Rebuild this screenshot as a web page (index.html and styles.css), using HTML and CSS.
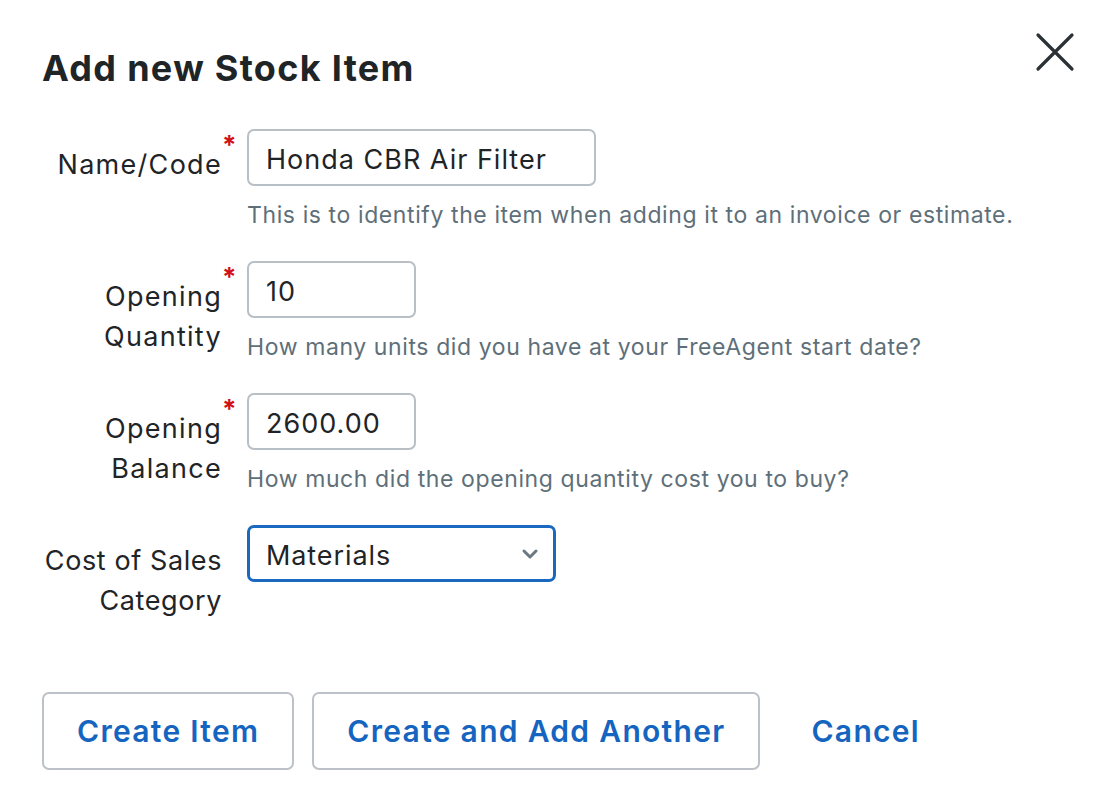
FILE: index.html
```html
<!DOCTYPE html>
<html lang="en">
<head>
<meta charset="utf-8">
<title>Add new Stock Item</title>
<link rel="stylesheet" href="styles.css">
</head>
<body>
<div class="modal">
  <div class="header">
    <h1 class="title">Add new Stock Item</h1>
    <button class="close" aria-label="Close">
      <svg width="40" height="40" viewBox="0 0 40 40"><path d="M3 3 L37 37 M37 3 L3 37" stroke="#2b3135" stroke-width="3.2" stroke-linecap="round" fill="none"/></svg>
    </button>
  </div>
  <form class="form">
    <div class="row">
      <label class="label"><span class="label-text">Name/Code</span><span class="req">*</span></label>
      <div class="field">
        <input class="input input-wide" type="text" value="Honda CBR Air Filter">
        <div class="help">This is to identify the item when adding it to an invoice or estimate.</div>
      </div>
    </div>
    <div class="row">
      <label class="label"><span class="label-text">Opening<br>Quantity</span><span class="req">*</span></label>
      <div class="field">
        <input class="input input-small" type="text" value="10">
        <div class="help">How many units did you have at your FreeAgent start date?</div>
      </div>
    </div>
    <div class="row">
      <label class="label"><span class="label-text">Opening<br>Balance</span><span class="req">*</span></label>
      <div class="field">
        <input class="input input-small" type="text" value="2600.00">
        <div class="help">How much did the opening quantity cost you to buy?</div>
      </div>
    </div>
    <div class="row">
      <label class="label"><span class="label-text label-text-tight">Cost of Sales<br>Category</span><span class="req"></span></label>
      <div class="field">
        <div class="select">
          <span class="select-value">Materials</span>
          <svg class="chev" width="18" height="12" viewBox="0 0 18 12"><path d="M3 3 L9 9 L15 3" stroke="#6b7880" stroke-width="3" fill="none" stroke-linecap="round" stroke-linejoin="round"/></svg>
        </div>
      </div>
    </div>
    <div class="actions">
      <button type="button" class="btn">Create Item</button>
      <button type="button" class="btn">Create and Add Another</button>
      <button type="button" class="link">Cancel</button>
    </div>
  </form>
</div>
</body>
</html>
```

FILE: styles.css
```css
* { box-sizing: border-box; }
html, body { margin: 0; padding: 0; background: #ffffff; }
body {
  font-family: "Inter", "Liberation Sans", sans-serif;
  color: #1f2427;
  width: 1106px;
  height: 800px;
  overflow: hidden;
}
.modal {
  padding: 28px 31px 0 42px;
}
.header {
  display: flex;
  justify-content: space-between;
  align-items: flex-start;
}
.title {
  margin: 18px 0 0 0;
  font-size: 36px;
  line-height: 44px;
  font-weight: 700;
  color: #1f2427;
  letter-spacing: 1.3px;
}
.close {
  border: 0;
  background: none;
  padding: 0;
  margin: 4px 0 0 0;
  width: 40px;
  height: 40px;
  cursor: pointer;
}
.close svg { display: block; }
.form {
  margin-top: 39px;
}
.row {
  display: grid;
  grid-template-columns: 192px 1fr;
  column-gap: 13px;
  margin-bottom: 29px;
}
.label {
  display: flex;
  justify-content: flex-end;
  align-items: flex-start;
  padding-top: 16px;
}
.label-text {
  text-align: right;
  white-space: nowrap;
  font-size: 27px;
  line-height: 40px;
  letter-spacing: 1.3px;
  color: #1f2427;
}
.label-text-tight {
  letter-spacing: 0.6px;
}
.req {
  flex-shrink: 0;
  width: 12px;
  margin-top: -10px;
  color: #d0101b;
  font-size: 26px;
  line-height: 20px;
  font-weight: 700;
  text-align: center;
}
.field {
  display: flex;
  flex-direction: column;
  align-items: flex-start;
}
.input {
  height: 57px;
  border: 2px solid #b8bfc5;
  border-radius: 7px;
  padding: 3px 17px 0;
  font-family: inherit;
  font-size: 27px;
  letter-spacing: 1px;
  color: #1f2427;
  background: #fff;
  outline: none;
}
.input-wide { width: 349px; }
.input-small { width: 169px; }
.help {
  margin-top: 12px;
  font-size: 23px;
  line-height: 34px;
  letter-spacing: 0.6px;
  color: #5e6f79;
}
.select {
  width: 309px;
  height: 57px;
  border: 3px solid #1a68c0;
  border-radius: 7px;
  padding: 3px 14px 0 16px;
  display: flex;
  align-items: center;
  justify-content: space-between;
  font-size: 27px;
  letter-spacing: 0.9px;
}
.chev { display: block; margin-top: -3px; }
.actions {
  display: flex;
  align-items: center;
  gap: 18px;
  margin-top: 71px;
}
.btn {
  height: 78px;
  padding: 0 33px;
  border: 2px solid #bcc2c7;
  border-radius: 7px;
  background: #fff;
  font-family: inherit;
  font-size: 30px;
  font-weight: 600;
  letter-spacing: 1.3px;
  color: #1565c0;
}
.link {
  border: 0;
  background: none;
  padding: 0 0 0 33px;
  font-family: inherit;
  font-size: 30px;
  font-weight: 600;
  letter-spacing: 1.3px;
  color: #1565c0;
}
```
